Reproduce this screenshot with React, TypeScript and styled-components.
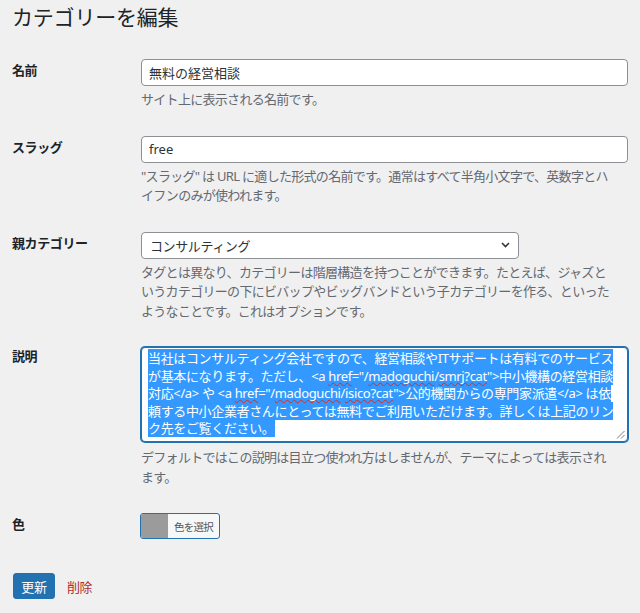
import React from "react";
import styled, { createGlobalStyle } from "styled-components";

const Global = createGlobalStyle`
  html, body { margin: 0; padding: 0; background: #f0f0f1; }
  body {
    font-family: "Noto Sans", "Noto Sans CJK JP", sans-serif;
    color: #1d2327;
    font-size: 13px;
  }
`;

const Page = styled.div`
  padding: 4px 12px 14px 12px;
`;

const Title = styled.h1`
  margin: 0;
  font-size: 21px;
  font-weight: 400;
  line-height: 27px;
  letter-spacing: -0.2px;
  color: #1d2327;
`;

const Form = styled.div`
  margin-top: 28px;
  display: flex;
  flex-direction: column;
  gap: 26px;
`;

const Row = styled.div`
  display: flex;
  align-items: flex-start;
`;

const Label = styled.div<{ $pt?: number }>`
  width: 129px;
  flex-shrink: 0;
  font-weight: 700;
  font-size: 13px;
  line-height: 19.5px;
  letter-spacing: -0.4px;
  padding-top: ${(p) => p.$pt ?? 2}px;
  color: #1d2327;
`;

const Field = styled.div`
  flex: 1;
  min-width: 0;
  display: flex;
  flex-direction: column;
  align-items: flex-start;
`;

const Input = styled.input`
  box-sizing: border-box;
  width: 100%;
  height: 27px;
  margin: 0;
  border: 1px solid #8c8f94;
  border-radius: 4px;
  background: #fff;
  padding: 0 7px;
  font-family: "Noto Sans", "Noto Sans CJK JP", sans-serif;
  font-size: 13px;
  color: #2c3338;
  outline: none;
`;

const Select = styled.div`
  box-sizing: border-box;
  width: 378px;
  height: 27px;
  border: 1px solid #8c8f94;
  border-radius: 4px;
  background: #fff;
  padding: 0 8px 0 8px;
  display: flex;
  align-items: center;
  justify-content: space-between;
  font-size: 13px;
  letter-spacing: -0.4px;
  color: #2c3338;
`;

const Description = styled.p<{ $mt?: number }>`
  margin: ${(p) => p.$mt ?? 4}px 0 0 0;
  color: #646970;
  font-size: 13px;
  line-height: 19.5px;
  letter-spacing: -0.7px;
  white-space: nowrap;
`;

const TextArea = styled.div`
  position: relative;
  box-sizing: border-box;
  width: 100%;
  height: 95px;
  border: 1px solid #2271b1;
  box-shadow: 0 0 0 1px #2271b1;
  border-radius: 4px;
  background: #fff;
  padding: 2px 6px;
  font-size: 13px;
  line-height: 17.5px;
  letter-spacing: -0.35px;
  white-space: nowrap;
  overflow: hidden;
`;

const Sel = styled.span`
  background: #3399ff;
  color: #fff;
`;

const Typo = styled.span`
  position: relative;
  text-decoration: underline wavy #e0281e;
  text-decoration-thickness: 1px;
  text-decoration-skip-ink: none;
  text-underline-offset: 1px;
`;

const Grip = styled.svg`
  position: absolute;
  right: 2px;
  bottom: 2px;
`;

const ColorButton = styled.div`
  display: inline-flex;
  height: 26px;
  box-sizing: border-box;
  border: 1px solid #2271b1;
  border-radius: 3px;
  overflow: hidden;
  background: #f6f7f7;
  margin-left: -1px;
`;

const Swatch = styled.div<{ $color: string }>`
  width: 27px;
  background: ${(p) => p.$color};
`;

const ColorText = styled.div`
  width: 51px;
  display: flex;
  align-items: center;
  justify-content: center;
  font-size: 10.5px;
  letter-spacing: -0.8px;
  color: #50575e;
`;

const Submit = styled.div`
  margin-top: 34px;
  display: flex;
  align-items: center;
  gap: 12px;
  padding-left: 1px;
`;

const PrimaryButton = styled.button`
  height: 26px;
  width: 42px;
  padding: 0;
  background: #2271b1;
  color: #fff;
  border: 1px solid #2271b1;
  border-radius: 3px;
  font-family: "Noto Sans", "Noto Sans CJK JP", sans-serif;
  font-size: 13px;
  letter-spacing: -0.3px;
  cursor: pointer;
`;

const DeleteLink = styled.a`
  color: #b32d2e;
  font-size: 13px;
  letter-spacing: -0.5px;
  text-decoration: none;
`;

export default function App() {
  return (
    <>
      <Global />
      <Page>
        <Title>カテゴリーを編集</Title>
        <Form>
          <Row>
            <Label>名前</Label>
            <Field>
              <Input defaultValue="無料の経営相談" readOnly />
              <Description>サイト上に表示される名前です。</Description>
            </Field>
          </Row>

          <Row>
            <Label>スラッグ</Label>
            <Field>
              <Input defaultValue="free" readOnly />
              <Description>
                "スラッグ" は URL に適した形式の名前です。通常はすべて半角小文字で、英数字とハ
                <br />
                イフンのみが使われます。
              </Description>
            </Field>
          </Row>

          <Row>
            <Label>親カテゴリー</Label>
            <Field>
              <Select>
                <span>コンサルティング</span>
                <svg width="9" height="6" viewBox="0 0 9 6">
                  <path d="M1 1L4.5 4.6L8 1" fill="none" stroke="#2c3338" strokeWidth="1.5" />
                </svg>
              </Select>
              <Description $mt={4}>
                タグとは異なり、カテゴリーは階層構造を持つことができます。たとえば、ジャズと
                <br />
                いうカテゴリーの下にビバップやビッグバンドという子カテゴリーを作る、といった
                <br />
                ようなことです。これはオプションです。
              </Description>
            </Field>
          </Row>

          <Row>
            <Label $pt={0}>説明</Label>
            <Field>
              <TextArea>
                <Sel>当社はコンサルティング会社ですので、経営相談やITサポートは有料でのサービス</Sel>
                <br />
                <Sel>
                  が基本になります。ただし、&lt;a <Typo>href</Typo>="/<Typo>madoguchi</Typo>/<Typo>smrj?cat</Typo>"&gt;中小機構の経営相談
                </Sel>
                <br />
                <Sel>
                  対応&lt;/a&gt; や &lt;a <Typo>href</Typo>="/<Typo>madoguchi</Typo>/<Typo>isico?cat</Typo>"&gt;公的機関からの専門家派遣&lt;/a&gt; は依
                </Sel>
                <br />
                <Sel>頼する中小企業者さんにとっては無料でご利用いただけます。詳しくは上記のリン</Sel>
                <br />
                <Sel>ク先をご覧ください。</Sel>
                <Grip width="9" height="9" viewBox="0 0 9 9">
                  <path d="M8.5 1L1 8.5M8.5 5L5 8.5" stroke="#7a7a7a" strokeWidth="1" fill="none" />
                </Grip>
              </TextArea>
              <Description $mt={6}>
                デフォルトではこの説明は目立つ使われ方はしませんが、テーマによっては表示され
                <br />
                ます。
              </Description>
            </Field>
          </Row>

          <Row>
            <Label>色</Label>
            <Field>
              <ColorButton>
                <Swatch $color="#9b9b9b" />
                <ColorText>色を選択</ColorText>
              </ColorButton>
            </Field>
          </Row>
        </Form>

        <Submit>
          <PrimaryButton>更新</PrimaryButton>
          <DeleteLink href="#">削除</DeleteLink>
        </Submit>
      </Page>
    </>
  );
}
